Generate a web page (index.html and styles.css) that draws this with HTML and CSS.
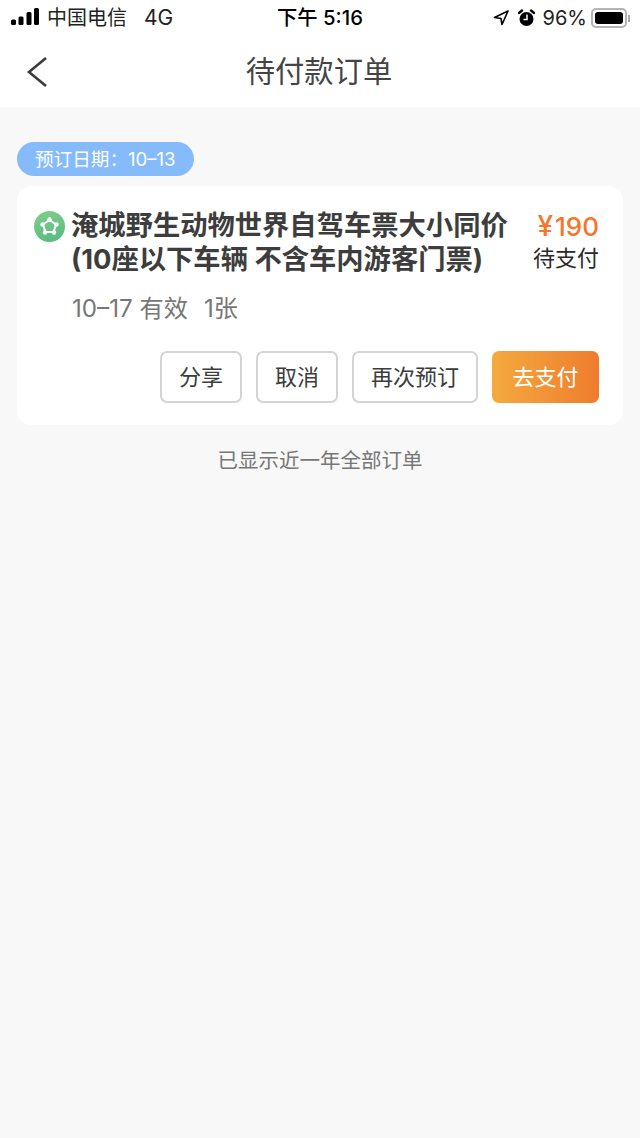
FILE: index.html

```html
<!DOCTYPE html>
<html lang="zh-CN">
<head>
  <meta charset="UTF-8" />
  <meta name="viewport" content="width=device-width, initial-scale=1.0"/>
  <title>待付款订单</title>
  <link rel="stylesheet" href="styles.css">
</head>
<body>
  <div class="top">
    <div class="status">
      <div class="status-left">
        <svg class="signal" width="28" height="17" viewBox="0 0 28 17">
          <rect x="0" y="11.500" width="5" height="5.500" rx="1.500"/>
          <rect x="7.500" y="8.500" width="5" height="8.500" rx="1.500"/>
          <rect x="15.500" y="4" width="5" height="13" rx="1.500"/>
          <rect x="23" y="0" width="5" height="17" rx="1.500"/>
        </svg>
        <span class="carrier">中国电信</span>
        <span class="net">4G</span>
      </div>
      <div class="status-time">下午 5:16</div>
      <div class="status-right">
        <svg class="loc" width="16" height="16" viewBox="0 0 16 16">
          <path d="M15 1 L1.500 7.500 L8 8.500 L9 14.500 Z" fill="none" stroke="#000" stroke-width="1.600" stroke-linejoin="round"/>
        </svg>
        <svg class="alarm" width="17" height="18" viewBox="0 0 17 18">
          <circle cx="8.500" cy="10" r="7" fill="#000"/>
          <path d="M1 4 L4 1.500 M16 4 L13 1.500" stroke="#000" stroke-width="2.400" stroke-linecap="round"/>
          <path d="M9 5.500 V10.500 H5.500" fill="none" stroke="#fff" stroke-width="1.500"/>
        </svg>
        <span class="pct">96%</span>
        <div class="battery"><div class="battery-fill"></div></div>
        <div class="battery-cap"></div>
      </div>
    </div>
    <div class="nav">
      <svg class="back" width="22" height="32" viewBox="0 0 22 32">
        <path d="M20 2 L3 16 L20 30" fill="none" stroke="#3a3a3a" stroke-width="2.600"/>
      </svg>
      <h1 class="nav-title">待付款订单</h1>
    </div>
  </div>

  <div class="list">
    <div class="date-tag">预订日期：10–13</div>
    <div class="order">
      <div class="order-head">
        <svg class="order-icon" width="31" height="31" viewBox="0 0 31 31">
          <defs>
            <linearGradient id="g" x1="0" y1="0" x2="0.300" y2="1">
              <stop offset="0" stop-color="#7fd08a"/>
              <stop offset="1" stop-color="#5cbc82"/>
            </linearGradient>
          </defs>
          <circle cx="15.500" cy="15.500" r="15.500" fill="url(#g)"/>
          <path d="M15.500 9 L22 13.500 L19.500 21 H11.500 L9 13.500 Z" fill="none" stroke="#fff" stroke-width="2" stroke-linejoin="round"/>
          <circle cx="15.500" cy="8.500" r="2.200" fill="#fff"/>
          <circle cx="22.500" cy="13.500" r="2.200" fill="#fff"/>
          <circle cx="8.500" cy="13.500" r="2.200" fill="#fff"/>
          <circle cx="20" cy="21.500" r="2.200" fill="#fff"/>
          <circle cx="11" cy="21.500" r="2.200" fill="#fff"/>
        </svg>
        <div class="order-title">淹城野生动物世界自驾车票大小同价<br>(10座以下车辆 不含车内游客门票)</div>
        <div class="order-price">
          <div class="price"><span class="yen">¥</span>190</div>
          <div class="pay-state">待支付</div>
        </div>
      </div>
      <div class="order-meta"><span>10–17 有效</span><span>1张</span></div>
      <div class="order-btns">
        <div class="btn btn-share">分享</div>
        <div class="btn btn-cancel">取消</div>
        <div class="btn btn-again">再次预订</div>
        <div class="btn btn-pay">去支付</div>
      </div>
    </div>
    <div class="list-end">已显示近一年全部订单</div>
  </div>
</body>
</html>
```

FILE: styles.css

```css
* { box-sizing: border-box; }
html, body { margin: 0; padding: 0; }
body {
  width: 640px;
  height: 1138px;
  overflow: hidden;
  background: #f8f8f8;
  font-family: Inter, "Noto Sans CJK SC", sans-serif;
  color: #333;
}

.top { background: #fff; height: 108px; border-bottom: 1px solid #fafafa; }

.status { height: 36px; display: flex; align-items: center; position: relative; color: #000; padding: 0 11px; }
.status-left { display: flex; align-items: center; }
.signal { fill: #000; margin-top: -3px; }
.carrier { font-size: 20px; line-height: 36px; margin-left: 8px; color: #222; }
.net { font-size: 21px; line-height: 36px; margin-left: 17px; color: #222; }
.status-time { position: absolute; left: 0; right: 0; top: 0; text-align: center; font-size: 20.300px; line-height: 36px; font-weight: 500; }
.status-right { margin-left: auto; display: flex; align-items: center; margin-right: -1px; }
.loc { margin-right: 9px; }
.alarm { margin-right: 8px; }
.pct { font-size: 20px; line-height: 36px; margin-right: 4px; color: #222; }
.battery { width: 36px; height: 20px; border: 2px solid #b4b4b4; border-radius: 5px; padding: 2px; }
.battery-fill { height: 100%; background: #000; border-radius: 3px; }
.battery-cap { width: 2px; height: 7px; background: #aaa; margin-left: 1px; }

.nav { height: 71px; display: flex; align-items: center; justify-content: center; position: relative; }
.back { position: absolute; left: 26px; top: 20px; }
.nav-title { margin: 0 2px 0 0; font-size: 29.300px; font-weight: 400; color: #444; line-height: 69px; }

.list { padding: 34px 17px 0; }
.date-tag {
  display: inline-block;
  height: 34px;
  line-height: 34px;
  padding: 0 18px;
  border-radius: 17px;
  background: #85bbfa;
  color: #fff;
  font-size: 18.600px;
  vertical-align: top;
}

.order { margin-top: 10px; height: 239px; background: #fff; border-radius: 14px; padding: 23px 24px 0 17px; }
.order-head { display: flex; }
.order-icon { flex: none; margin: 2px 6px 0 0; }
.order-title { flex: 1; font-size: 27.300px; font-weight: 700; line-height: 33.500px; color: #3d3d3d; white-space: nowrap; }
.order-price { text-align: right; }
.price { font-size: 26px; line-height: 35px; color: #f5762a; font-weight: 500; }
.yen { font-size: 28px; line-height: 0; margin-right: 2px; }
.pay-state { font-size: 22px; line-height: 29px; color: #2a2a2a; }

.order-meta { margin: 16px 0 0 38px; font-size: 24.200px; line-height: 34px; color: #777; display: flex; gap: 16px; }

.order-btns { margin-top: 25px; display: flex; justify-content: flex-end; gap: 14px; }
.btn { height: 52px; line-height: 48px; text-align: center; font-size: 22px; color: #3c3c3c; border: 2px solid #d4d4d4; border-radius: 7px; background: #fff; }
.btn-share, .btn-cancel { width: 82px; }
.btn-again { width: 126px; }
.btn-pay { width: 107px; border: 0; line-height: 52px; color: #fff; background: linear-gradient(90deg, #f4aa3f, #ef7c2d); }

.list-end { margin-top: 21px; text-align: center; font-size: 20.500px; line-height: 30px; color: #777; }
```
